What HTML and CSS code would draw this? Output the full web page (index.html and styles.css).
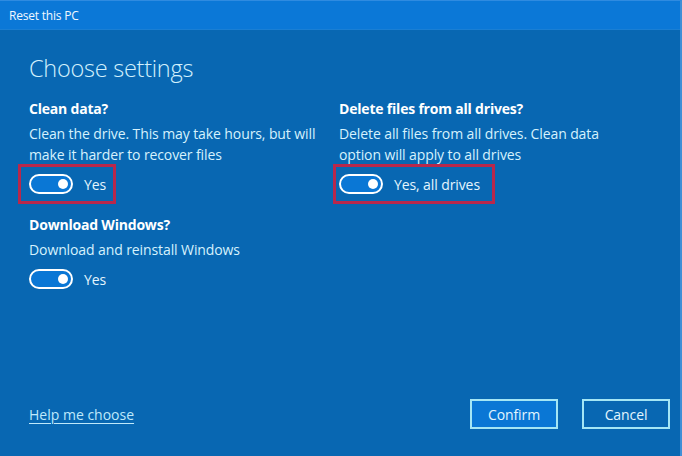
FILE: index.html
```html
<!DOCTYPE html>
<html lang="en">
<head>
<meta charset="utf-8">
<title>Reset this PC</title>
<link rel="stylesheet" href="styles.css">
</head>
<body>
<div class="window">
  <div class="titlebar">Reset this PC</div>
  <div class="content">
    <h1 class="page-title">Choose settings</h1>
    <div class="grid">
      <div class="setting">
        <div class="setting-name">Clean data?</div>
        <div class="setting-desc">Clean the drive. This may take hours, but will make it harder to recover files</div>
        <div class="toggle-row">
          <span class="toggle"><span class="knob"></span></span>
          <span class="toggle-label">Yes</span>
          <span class="mark mark-left"></span>
        </div>
      </div>
      <div class="setting">
        <div class="setting-name">Delete files from all drives?</div>
        <div class="setting-desc">Delete all files from all drives. Clean data option will apply to all drives</div>
        <div class="toggle-row">
          <span class="toggle"><span class="knob"></span></span>
          <span class="toggle-label">Yes, all drives</span>
          <span class="mark mark-right"></span>
        </div>
      </div>
      <div class="setting second">
        <div class="setting-name">Download Windows?</div>
        <div class="setting-desc">Download and reinstall Windows</div>
        <div class="toggle-row">
          <span class="toggle"><span class="knob"></span></span>
          <span class="toggle-label">Yes</span>
        </div>
      </div>
    </div>
    <div class="footer">
      <a class="help-link" href="#">Help me choose</a>
      <div class="buttons">
        <button class="btn btn-primary">Confirm</button>
        <button class="btn">Cancel</button>
      </div>
    </div>
  </div>
</div>
</body>
</html>
```

FILE: styles.css
```css
* { box-sizing: border-box; }
html, body { margin: 0; padding: 0; }
body {
  width: 682px;
  height: 456px;
  overflow: hidden;
  font-family: "Open Sans", "Noto Sans", "Liberation Sans", sans-serif;
  background: #0867b2;
}
.window {
  width: 682px;
  height: 456px;
  background: #0867b2;
  border-top: 1px solid #2f8be0;
  border-right: 2px solid #3f8fd6;
  display: flex;
  flex-direction: column;
}
.titlebar {
  height: 29px;
  background: #0b78d7;
  color: #f2f8ff;
  font-size: 12px;
  letter-spacing: -0.2px;
  padding-left: 9px;
  display: flex;
  align-items: center;
  border-bottom: 1px solid #1a7fd4;
}
.content {
  flex: 1;
  display: flex;
  flex-direction: column;
  padding: 0 0 0 29px;
}
.page-title {
  margin: 23px 0 0 0;
  font-size: 23.5px;
  font-weight: 300;
  color: #d3f1fd;
  letter-spacing: -0.25px;
  line-height: 30px;
}
.grid {
  display: grid;
  grid-template-columns: 310px 310px;
  margin-top: 16px;
}
.setting {
  display: flex;
  flex-direction: column;
}
.second { margin-top: 21px; }
.setting-name {
  font-size: 14px;
  font-weight: 700;
  color: #ffffff;
  line-height: 20px;
  letter-spacing: -0.2px;
}
.setting-desc {
  margin-top: 4px;
  font-size: 14px;
  color: #d6f2fd;
  line-height: 21px;
  letter-spacing: -0.1px;
  width: 292px;
}
.toggle-row {
  position: relative;
  display: flex;
  align-items: center;
  margin-top: 9px;
  height: 20px;
}
.toggle {
  width: 44px;
  height: 20px;
  border: 2px solid #ffffff;
  border-radius: 10px;
  background: #0a77d5;
  display: flex;
  align-items: center;
  justify-content: flex-end;
  padding-right: 3px;
}
.knob {
  width: 10px;
  height: 10px;
  border-radius: 50%;
  background: #ffffff;
}
.toggle-label {
  margin-left: 11px;
  font-size: 14px;
  color: #e4f5fe;
  letter-spacing: -0.1px;
}
.mark {
  position: absolute;
  border: 3px solid #b8284c;
  top: -10px;
  bottom: -10px;
}
.mark-left { left: -11px; width: 98px; }
.mark-right { left: -6px; width: 162px; }
.footer {
  margin-top: auto;
  margin-bottom: 27px;
  display: flex;
  align-items: center;
  justify-content: space-between;
  padding-right: 10px;
}
.help-link {
  font-size: 14px;
  color: #bfe9fb;
  text-decoration: underline;
  text-underline-offset: 3px;
  letter-spacing: 0;
}
.buttons {
  display: flex;
  gap: 24px;
}
.btn {
  width: 88px;
  height: 30px;
  border: 2px solid #a4e6f5;
  background: #0867b2;
  color: #e2f5fe;
  font-family: inherit;
  font-size: 14px;
  letter-spacing: -0.1px;
  padding: 0;
}
.btn-primary { background: #0a77d5; }
```
